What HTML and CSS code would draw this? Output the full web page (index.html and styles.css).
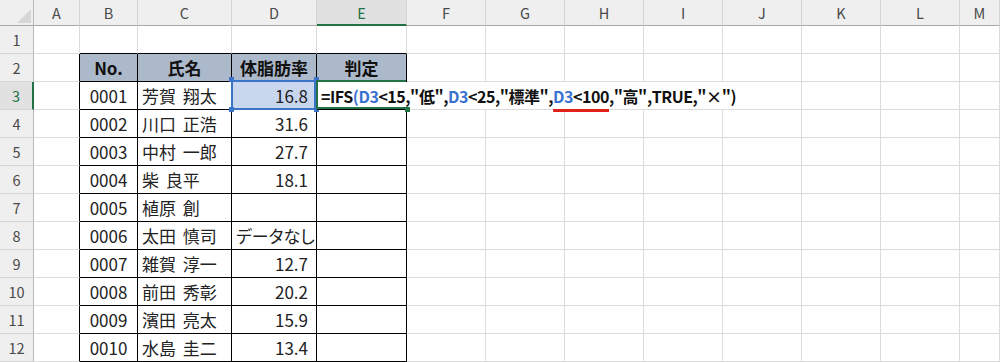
FILE: index.html
```html
<!DOCTYPE html>
<html lang="ja">
<head>
    <meta charset='utf-8'>
    <title>体脂肪率 判定</title>
    <link rel="stylesheet" href="styles.css">
</head>
<body>
    <div class="sheet">

        <!-- column letters -->
        <div class="row row-head">
            <div class="corner"></div>
            <div class="colh">A</div>
            <div class="colh">B</div>
            <div class="colh">C</div>
            <div class="colh">D</div>
            <div class="colh colh-cur">E</div>
            <div class="colh">F</div>
            <div class="colh">G</div>
            <div class="colh">H</div>
            <div class="colh">I</div>
            <div class="colh">J</div>
            <div class="colh">K</div>
            <div class="colh">L</div>
            <div class="colh">M</div>
        </div>

        <div class="row">
            <div class="rowh">1</div>
            <div class="c"></div>
            <div class="c c-top"></div>
            <div class="c c-top"></div>
            <div class="c c-top"></div>
            <div class="c c-top"></div>
            <div class="c"></div><div class="c"></div><div class="c"></div><div class="c"></div>
            <div class="c"></div><div class="c"></div><div class="c"></div><div class="c"></div>
        </div>

        <div class="row">
            <div class="rowh">2</div>
            <div class="c c-left"></div>
            <div class="c t th">No.</div>
            <div class="c t th">氏名</div>
            <div class="c t th">体脂肪率</div>
            <div class="c t th">判定</div>
            <div class="c"></div><div class="c"></div><div class="c"></div><div class="c"></div>
            <div class="c"></div><div class="c"></div><div class="c"></div><div class="c"></div>
        </div>

        <div class="row">
            <div class="rowh rowh-cur">3</div>
            <div class="c c-left"></div>
            <div class="c t ctr">0001</div>
            <div class="c t name">芳賀 翔太</div>
            <div class="c t num sel">16.8</div>
            <div class="c t active"><span class="formula">=IFS<span class="ref">(D3</span>&lt;15,"低",<span class="ref">D3</span>&lt;25,"標準",<span class="mark"><span class="ref">D3</span>&lt;100</span>,"高",TRUE,"×")</span></div>
            <div class="c spill"></div><div class="c spill"></div><div class="c spill"></div><div class="c spill"></div>
            <div class="c"></div><div class="c"></div><div class="c"></div><div class="c"></div>
        </div>

        <div class="row">
            <div class="rowh">4</div>
            <div class="c c-left"></div>
            <div class="c t ctr">0002</div>
            <div class="c t name">川口 正浩</div>
            <div class="c t num">31.6</div>
            <div class="c t"></div>
            <div class="c"></div><div class="c"></div><div class="c"></div><div class="c"></div>
            <div class="c"></div><div class="c"></div><div class="c"></div><div class="c"></div>
        </div>

        <div class="row">
            <div class="rowh">5</div>
            <div class="c c-left"></div>
            <div class="c t ctr">0003</div>
            <div class="c t name">中村 一郎</div>
            <div class="c t num">27.7</div>
            <div class="c t"></div>
            <div class="c"></div><div class="c"></div><div class="c"></div><div class="c"></div>
            <div class="c"></div><div class="c"></div><div class="c"></div><div class="c"></div>
        </div>

        <div class="row">
            <div class="rowh">6</div>
            <div class="c c-left"></div>
            <div class="c t ctr">0004</div>
            <div class="c t name">柴 良平</div>
            <div class="c t num">18.1</div>
            <div class="c t"></div>
            <div class="c"></div><div class="c"></div><div class="c"></div><div class="c"></div>
            <div class="c"></div><div class="c"></div><div class="c"></div><div class="c"></div>
        </div>

        <div class="row">
            <div class="rowh">7</div>
            <div class="c c-left"></div>
            <div class="c t ctr">0005</div>
            <div class="c t name">植原 創</div>
            <div class="c t num"></div>
            <div class="c t"></div>
            <div class="c"></div><div class="c"></div><div class="c"></div><div class="c"></div>
            <div class="c"></div><div class="c"></div><div class="c"></div><div class="c"></div>
        </div>

        <div class="row">
            <div class="rowh">8</div>
            <div class="c c-left"></div>
            <div class="c t ctr">0006</div>
            <div class="c t name">太田 慎司</div>
            <div class="c t">データなし</div>
            <div class="c t"></div>
            <div class="c"></div><div class="c"></div><div class="c"></div><div class="c"></div>
            <div class="c"></div><div class="c"></div><div class="c"></div><div class="c"></div>
        </div>

        <div class="row">
            <div class="rowh">9</div>
            <div class="c c-left"></div>
            <div class="c t ctr">0007</div>
            <div class="c t name">雑賀 淳一</div>
            <div class="c t num">12.7</div>
            <div class="c t"></div>
            <div class="c"></div><div class="c"></div><div class="c"></div><div class="c"></div>
            <div class="c"></div><div class="c"></div><div class="c"></div><div class="c"></div>
        </div>

        <div class="row">
            <div class="rowh">10</div>
            <div class="c c-left"></div>
            <div class="c t ctr">0008</div>
            <div class="c t name">前田 秀彰</div>
            <div class="c t num">20.2</div>
            <div class="c t"></div>
            <div class="c"></div><div class="c"></div><div class="c"></div><div class="c"></div>
            <div class="c"></div><div class="c"></div><div class="c"></div><div class="c"></div>
        </div>

        <div class="row">
            <div class="rowh">11</div>
            <div class="c c-left"></div>
            <div class="c t ctr">0009</div>
            <div class="c t name">濱田 亮太</div>
            <div class="c t num">15.9</div>
            <div class="c t"></div>
            <div class="c"></div><div class="c"></div><div class="c"></div><div class="c"></div>
            <div class="c"></div><div class="c"></div><div class="c"></div><div class="c"></div>
        </div>

        <div class="row">
            <div class="rowh">12</div>
            <div class="c c-left"></div>
            <div class="c t ctr">0010</div>
            <div class="c t name">水島 圭二</div>
            <div class="c t num">13.4</div>
            <div class="c t"></div>
            <div class="c"></div><div class="c"></div><div class="c"></div><div class="c"></div>
            <div class="c"></div><div class="c"></div><div class="c"></div><div class="c"></div>
        </div>

    </div>
</body>
</html>
```

FILE: styles.css
```css
/* reset */
body {
    margin: 0;
    padding: 0;
    background-color: white;
    color: #222;
    font-family: "Noto Sans CJK JP", sans-serif;
    font-feature-settings: "palt";
    overflow: hidden;
}

/* grid */
.sheet {
    width: 1000px;
}

.row {
    display: grid;
    grid-template-columns: 34px 46px 58px 94px 85px 90px repeat(7, 79px) 1fr;
    height: 28px;
}

.row-head {
    height: 26px;
}

.corner,
.colh,
.rowh,
.c {
    box-sizing: border-box;
    border-right: 1px solid #dcdcdc;
    border-bottom: 1px solid #dcdcdc;
}

/* headers */
.corner {
    background-color: #efefef;
    border-right-color: #b8b8b8;
    border-bottom-color: #a8a8a8;
    display: flex;
    justify-content: flex-end;
    align-items: flex-end;
    padding: 0 2px 2px 0;
}
.corner::after {
    content: "";
    width: 0;
    height: 0;
    border-left: 14px solid transparent;
    border-bottom: 14px solid #d6d6d6;
}

.colh {
    background-color: #efefef;
    border-right-color: #d4d4d4;
    border-bottom-color: #a8a8a8;
    color: #4a4a4a;
    font-size: 14.5px;
    display: flex;
    justify-content: center;
    align-items: center;
}

.colh-cur {
    background-color: #e1e1e1;
    color: #217346;
    border-bottom: 2px solid #217346;
}

.rowh {
    background-color: #efefef;
    border-right-color: #b8b8b8;
    border-bottom-color: #d4d4d4;
    color: #4a4a4a;
    font-size: 14.5px;
    display: flex;
    justify-content: center;
    align-items: center;
}

.rowh-cur {
    background-color: #e1e1e1;
    color: #217346;
    border-right: 2px solid #217346;
}

/* cells */
.c {
    display: flex;
    align-items: center;
    padding: 0 4px;
    font-size: 17px;
    white-space: nowrap;
}

.c-top {
    border-bottom-color: black;
}

.c-left {
    border-right-color: black;
}

.t {
    border-right-color: black;
    border-bottom-color: black;
}

.th {
    background-color: #acb9ca;
    color: #111;
    font-weight: bold;
    justify-content: center;
}

.ctr {
    justify-content: center;
}

.name {
    word-spacing: 3px;
}

.num {
    justify-content: flex-end;
    padding-right: 8px;
}

/* D3 selection */
.sel {
    position: relative;
    background-color: #c8d6ee;
}
.sel::before {
    content: "";
    position: absolute;
    top: -2px;
    left: -1px;
    right: 0;
    bottom: -1px;
    border: 2px solid #3b73c9;
}
.sel::after {
    content: "";
    position: absolute;
    top: -5px;
    left: -3px;
    width: 5px;
    height: 5px;
    background-color: #3b73c9;
    box-shadow: 85px 0 #3b73c9, 0 30px #3b73c9, 85px 30px #3b73c9;
}

/* E3 being edited, text runs over F..I */
.active {
    position: relative;
    z-index: 1;
    border-right-color: transparent;
    overflow: visible;
}
.active::before {
    content: "";
    position: absolute;
    top: -2px;
    left: -1px;
    right: 0;
    bottom: 0;
    border: 2px solid #217346;
    border-right: none;
}
.active::after {
    content: "";
    position: absolute;
    left: 88px;
    top: 25px;
    width: 5px;
    height: 5px;
    background-color: #217346;
}

.spill {
    border-right-color: transparent;
}

.formula {
    font-size: 16px;
    font-weight: bold;
    letter-spacing: -0.45px;
    color: #111;
}

.ref {
    color: #3a72d0;
}

.mark {
    text-decoration: underline 3px #e3211c;
    text-underline-offset: 6px;
}
```
